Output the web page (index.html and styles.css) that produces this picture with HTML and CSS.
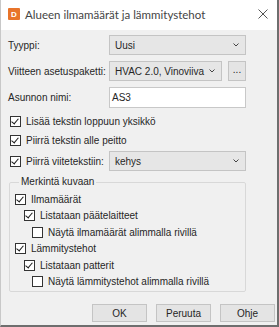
FILE: index.html
```html
<!DOCTYPE html>
<html lang="fi">
<head>
  <meta charset="UTF-8">
  <meta name="viewport" content="width=device-width, initial-scale=1.0">
  <title>Alueen ilmamäärät ja lämmitystehot</title>
  <link rel="stylesheet" href="styles.css">
</head>
<body>
  <div class="window">
    <div class="titlebar">
      <span class="app-icon">D</span>
      <span class="title">Alueen ilmamäärät ja lämmitystehot</span>
      <svg class="close" width="10" height="10" viewBox="0 0 10 10">
        <path d="M0.5 0.5 L9.5 9.5 M9.5 0.5 L0.5 9.5" stroke="#555" stroke-width="1" fill="none"/>
      </svg>
    </div>

    <div class="content">
      <div class="form">
        <div class="row">
          <span class="label">Tyyppi:</span>
          <div class="combo">
            <span>Uusi</span>
            <svg class="chevron" width="6" height="4" viewBox="0 0 6 4"><path d="M0.5 0.5 L3 3 L5.5 0.5" stroke="#444" fill="none"/></svg>
          </div>
        </div>
        <div class="row">
          <span class="label">Viitteen asetuspaketti:</span>
          <div class="combo-with-btn">
            <div class="combo">
              <span>HVAC 2.0, Vinoviiva</span>
              <svg class="chevron" width="6" height="4" viewBox="0 0 6 4"><path d="M0.5 0.5 L3 3 L5.5 0.5" stroke="#444" fill="none"/></svg>
            </div>
            <div class="btn small">...</div>
          </div>
        </div>
        <div class="row">
          <span class="label">Asunnon nimi:</span>
          <div class="textbox">AS3</div>
        </div>
      </div>

      <div class="checks">
        <div class="check level-0"><span class="box on"></span>Lisää tekstin loppuun yksikkö</div>
        <div class="check level-0"><span class="box on"></span>Piirrä tekstin alle peitto</div>
        <div class="row">
          <div class="check level-0"><span class="box on"></span>Piirrä viitetekstiin:</div>
          <div class="combo">
            <span>kehys</span>
            <svg class="chevron" width="6" height="4" viewBox="0 0 6 4"><path d="M0.5 0.5 L3 3 L5.5 0.5" stroke="#444" fill="none"/></svg>
          </div>
        </div>
      </div>

      <fieldset class="group">
        <legend>Merkintä kuvaan</legend>
        <div class="check level-1"><span class="box on"></span>Ilmamäärät</div>
        <div class="check level-2"><span class="box on"></span>Listataan päätelaitteet</div>
        <div class="check level-3"><span class="box"></span>Näytä ilmamäärät alimmalla rivillä</div>
        <div class="check level-1"><span class="box on"></span>Lämmitystehot</div>
        <div class="check level-2"><span class="box on"></span>Listataan patterit</div>
        <div class="check level-3"><span class="box"></span>Näytä lämmitystehot alimmalla rivillä</div>
      </fieldset>

      <div class="buttons">
        <div class="btn">OK</div>
        <div class="btn">Peruuta</div>
        <div class="btn">Ohje</div>
      </div>
    </div>
  </div>
</body>
</html>
```

FILE: styles.css
```css
body {
  margin: 0;
  font-family: "Liberation Sans", Arial, sans-serif;
  font-size: 10px;
  color: #262626;
  background-color: #f0f0f0;
}
.window {
  width: 279px;
  height: 327px;
  box-sizing: border-box;
  border-left: 1px solid #c8c8c8;
  border-right: 2px solid #6e6e6e;
  border-bottom: 2px solid #6e6e6e;
  background-color: #f0f0f0;
  display: flex;
  flex-direction: column;
}
.titlebar {
  height: 30px;
  flex: none;
  background-color: #fff;
  display: flex;
  align-items: center;
  padding-left: 7px;
  padding-bottom: 2px;
  box-sizing: border-box;
}
.app-icon {
  width: 12px;
  height: 12px;
  background-color: #e8742a;
  color: #fff;
  font-size: 8px;
  font-weight: bold;
  display: flex;
  align-items: center;
  justify-content: center;
  border-radius: 1px;
}
.title {
  margin-left: 5px;
  font-family: Lato, "Liberation Sans", sans-serif;
  font-size: 11.5px;
  color: #444;
}
.close {
  margin-left: auto;
  margin-right: 9px;
}
.content {
  padding-left: 7px;
  display: flex;
  flex-direction: column;
}
.form {
  margin-top: 5px;
  display: flex;
  flex-direction: column;
  gap: 6px;
  width: 238px;
}
.row {
  display: grid;
  grid-template-columns: 101px 137px;
  align-items: center;
  height: 20px;
}
.label {
  white-space: nowrap;
}
.combo {
  height: 20px;
  box-sizing: border-box;
  border: 1px solid #c4c4c4;
  background-color: #e6e6e6;
  display: flex;
  align-items: center;
  padding-left: 5px;
  padding-right: 6px;
  white-space: nowrap;
}
.chevron {
  margin-left: auto;
}
.combo-with-btn {
  display: flex;
  gap: 6px;
  align-items: center;
}
.combo-with-btn .combo {
  flex: 1;
}
.textbox {
  height: 21px;
  box-sizing: border-box;
  border: 1px solid #c8c8c8;
  background-color: #fff;
  display: flex;
  align-items: center;
  padding-left: 2px;
}
.btn {
  height: 18px;
  box-sizing: border-box;
  border: 1px solid #c4c4c4;
  background-color: #e4e4e4;
  display: flex;
  align-items: center;
  justify-content: center;
  width: 55px;
}
.btn.small {
  width: 18px;
  height: 20px;
  padding-bottom: 3px;
}
.checks {
  margin-top: 6px;
  display: flex;
  flex-direction: column;
  gap: 3px;
  width: 238px;
}
.check {
  display: flex;
  align-items: center;
  height: 16px;
  white-space: nowrap;
}
.box {
  width: 9px;
  height: 9px;
  border: 1px solid #333;
  background-color: #fff;
  margin-right: 5px;
  flex: none;
  position: relative;
}
.box.on::after {
  content: "";
  position: absolute;
  left: 2px;
  top: 0px;
  width: 3px;
  height: 6px;
  border-right: 1.6px solid #1a1a1a;
  border-bottom: 1.6px solid #1a1a1a;
  transform: rotate(40deg);
}
.level-0 {
  padding-left: 2px;
}
.level-1 {
  padding-left: 0;
}
.level-2 {
  padding-left: 9px;
}
.level-3 {
  padding-left: 17px;
}
.group {
  margin: 4px 0 0 1px;
  padding: 2px 0 1px 5px;
  width: 237px;
  box-sizing: border-box;
  border: 1px solid #d8d8d8;
  border-radius: 2px;
  display: flex;
  flex-direction: column;
  gap: 0.4px;
}
.group legend {
  padding: 0 2px;
  margin-left: 4px;
  line-height: 14px;
}
.group .check {
  height: 16.2px;
}
.buttons {
  margin-top: 12px;
  display: flex;
  justify-content: flex-end;
  gap: 9px;
  padding-right: 2px;
}
```
